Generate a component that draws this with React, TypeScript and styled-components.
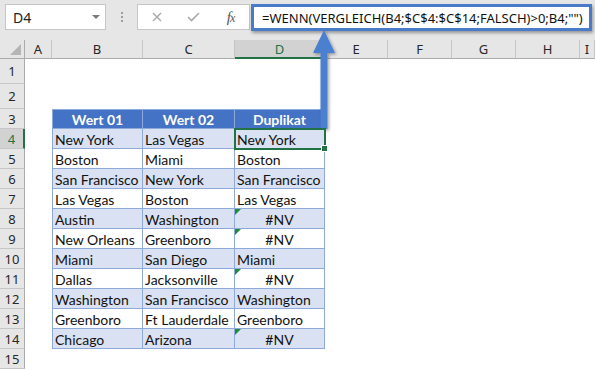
import * as React from 'react';
import styled, { createGlobalStyle, css } from 'styled-components';

const GREEN = '#217346';
const TABLE_LINE = '#8eaadb';
const UI_FONT = `'Noto Sans', 'Open Sans', sans-serif`;
const CELL_FONT = `Lato, 'Liberation Sans', sans-serif`;

const GlobalStyle = createGlobalStyle`
  html, body {
    margin: 0;
    padding: 0;
    background: #fff;
  }
  body {
    font-family: ${UI_FONT};
  }
`;

const Window = styled.div`
  position: relative;
  width: 595px;
  height: 370px;
  overflow: hidden;
  background: #fff;
`;

// formula bar
const FormulaBar = styled.div`
  display: flex;
  align-items: flex-start;
  height: 40px;
  padding: 4px 3px 0 5px;
  box-sizing: border-box;
  background: #e6e6e6;
`;

const NameBox = styled.div`
  flex: 0 0 101px;
  display: flex;
  align-items: center;
  justify-content: space-between;
  height: 26px;
  padding: 0 5px 0 7px;
  box-sizing: border-box;
  border: 1px solid #c6c6c6;
  background: #fff;
  font-size: 14px;
  color: #222;
`;

const Caret = styled.span`
  width: 0;
  height: 0;
  border-left: 4px solid transparent;
  border-right: 4px solid transparent;
  border-top: 4px solid #7a7a7a;
`;

const Grip = styled.div`
  flex: 0 0 31px;
  display: flex;
  flex-direction: column;
  align-items: center;
  justify-content: center;
  gap: 2px;
  height: 26px;
`;

const GripDot = styled.span`
  width: 2px;
  height: 2px;
  background: #9d9d9d;
`;

const FxBox = styled.div`
  flex: 0 0 113px;
  display: flex;
  align-items: center;
  height: 26px;
  box-sizing: border-box;
  border: 1px solid #c6c6c6;
  background: #fff;
`;

const FxSlot = styled.div`
  display: flex;
  align-items: center;
  justify-content: center;
  width: 37px;
  height: 100%;
`;

const FxLabel = styled.span`
  font-family: 'Liberation Serif', serif;
  font-style: italic;
  font-size: 15px;
  color: #555;
  letter-spacing: -1px;

  small {
    font-size: 12px;
  }
`;

const FormulaInput = styled.div`
  flex: 1;
  min-width: 0;
  display: flex;
  align-items: center;
  height: 27px;
  margin-left: 1px;
  padding-left: 8px;
  box-sizing: border-box;
  border: 3px solid #4a7bcb;
  box-shadow: 1px 2px 3px rgba(0, 0, 0, 0.35);
  background: #fff;
  font-size: 13px;
  color: #111;
  white-space: nowrap;
  overflow: hidden;
`;

// sheet
const Sheet = styled.div`
  display: grid;
  grid-template-columns: 25px 27px 91px 92px 90px 63px 64px 64px 64px 1fr;
  grid-template-rows: 19px 25px 25px repeat(13, 20px);
`;

const headBase = css`
  display: flex;
  align-items: center;
  justify-content: center;
  box-sizing: border-box;
  background: #e6e6e6;
  font-family: ${UI_FONT};
  font-size: 13px;
  color: #262626;
`;

const Corner = styled.div`
  ${headBase};
  align-items: flex-end;
  justify-content: flex-end;
  padding: 0 3px 3px 0;
  border-right: 1px solid #ababab;
  border-bottom: 1px solid #ababab;
`;

const CornerMark = styled.span`
  width: 11px;
  height: 11px;
  background: #b5b5b5;
  clip-path: polygon(100% 0, 100% 100%, 0 100%);
`;

const ColHead = styled.div<{ $active?: boolean }>`
  ${headBase};
  border-right: 1px solid #c6c6c6;
  border-bottom: 1px solid #ababab;
  ${(p) =>
    p.$active &&
    css`
      background: #d2d2d2;
      color: ${GREEN};
      border-bottom: 2px solid ${GREEN};
    `}
`;

const RowHead = styled.div<{ $active?: boolean }>`
  ${headBase};
  border-right: 1px solid #ababab;
  border-bottom: 1px solid #c6c6c6;
  ${(p) =>
    p.$active &&
    css`
      background: #d2d2d2;
      color: ${GREEN};
      border-right: 2px solid ${GREEN};
    `}
`;

const Blank = styled.div`
  background: #fff;
`;

const TableHead = styled.div<{ $first?: boolean }>`
  display: flex;
  align-items: center;
  justify-content: center;
  box-sizing: border-box;
  background: #4472c4;
  color: #fff;
  font-family: ${CELL_FONT};
  font-weight: bold;
  font-size: 14px;
  border-top: 1px solid ${TABLE_LINE};
  border-right: 1px solid ${TABLE_LINE};
  border-bottom: 1px solid ${TABLE_LINE};
  ${(p) => p.$first && `border-left: 1px solid ${TABLE_LINE};`}
`;

const TableCell = styled.div<{
  $first?: boolean;
  $shaded?: boolean;
  $center?: boolean;
  $error?: boolean;
  $selected?: boolean;
}>`
  position: relative;
  display: flex;
  align-items: center;
  justify-content: ${(p) => (p.$center ? 'center' : 'flex-start')};
  padding: 1px 0 0 ${(p) => (p.$center ? '0' : '2px')};
  box-sizing: border-box;
  background: ${(p) => (p.$shaded ? '#d9e1f2' : '#fff')};
  color: #111;
  font-family: ${CELL_FONT};
  font-size: 14px;
  white-space: nowrap;
  border-right: 1px solid ${TABLE_LINE};
  border-bottom: 1px solid ${TABLE_LINE};
  ${(p) => p.$first && `border-left: 1px solid ${TABLE_LINE};`}

  ${(p) =>
    p.$error &&
    css`
      &::before {
        content: '';
        position: absolute;
        top: 0;
        left: 0;
        border-top: 6px solid #1e8c3a;
        border-right: 6px solid transparent;
      }
    `}

  ${(p) =>
    p.$selected &&
    css`
      z-index: 2;
      outline: 2px solid ${GREEN};
      outline-offset: -1px;

      &::after {
        content: '';
        position: absolute;
        right: -4px;
        bottom: -4px;
        width: 5px;
        height: 5px;
        background: ${GREEN};
        border: 1px solid #fff;
      }
    `}
`;

const Arrow = styled.svg`
  position: absolute;
  left: 309px;
  top: 28px;
  overflow: visible;
`;

const COLUMNS = ['A', 'B', 'C', 'D', 'E', 'F', 'G', 'H', 'I'];
const HEADERS = ['Wert 01', 'Wert 02', 'Duplikat'];
const ROWS: [string, string, string][] = [
  ['New York', 'Las Vegas', 'New York'],
  ['Boston', 'Miami', 'Boston'],
  ['San Francisco', 'New York', 'San Francisco'],
  ['Las Vegas', 'Boston', 'Las Vegas'],
  ['Austin', 'Washington', '#NV'],
  ['New Orleans', 'Greenboro', '#NV'],
  ['Miami', 'San Diego', 'Miami'],
  ['Dallas', 'Jacksonville', '#NV'],
  ['Washington', 'San Francisco', 'Washington'],
  ['Greenboro', 'Ft Lauderdale', 'Greenboro'],
  ['Chicago', 'Arizona', '#NV'],
];
const ROW_COUNT = 15;
const ACTIVE_ROW = 4;
const ACTIVE_COL = 'D';

function renderCell(row: number, col: number) {
  const key = `${row}-${col}`;
  // col 0 is the row header, col 1 is A
  if (col === 0) {
    return (
      <RowHead key={key} $active={row === ACTIVE_ROW}>
        {row}
      </RowHead>
    );
  }
  const tableCol = col - 2; // B..D -> 0..2
  if (tableCol >= 0 && tableCol < 3) {
    if (row === 3) {
      return (
        <TableHead key={key} $first={tableCol === 0}>
          {HEADERS[tableCol]}
        </TableHead>
      );
    }
    const item = ROWS[row - 4];
    if (item) {
      const value = item[tableCol];
      const isError = value === '#NV';
      return (
        <TableCell
          key={key}
          $first={tableCol === 0}
          $shaded={(row - 4) % 2 === 0}
          $center={isError}
          $error={isError}
          $selected={row === ACTIVE_ROW && COLUMNS[col - 1] === ACTIVE_COL}
        >
          {value}
        </TableCell>
      );
    }
  }
  return <Blank key={key} />;
}

export default function App() {
  const rows: number[] = [];
  for (let r = 1; r <= ROW_COUNT; r++) rows.push(r);

  return (
    <Window>
      <GlobalStyle />
      <FormulaBar>
        <NameBox>
          <span>D4</span>
          <Caret />
        </NameBox>
        <Grip>
          <GripDot />
          <GripDot />
          <GripDot />
        </Grip>
        <FxBox>
          <FxSlot>
            <svg width="10" height="10" viewBox="0 0 10 10">
              <path d="M1 1L9 9M9 1L1 9" stroke="#a9a9a9" strokeWidth="1.4" />
            </svg>
          </FxSlot>
          <FxSlot>
            <svg width="13" height="10" viewBox="0 0 13 10">
              <path d="M1 5L4.5 8.5L12 1" stroke="#a9a9a9" strokeWidth="1.6" fill="none" />
            </svg>
          </FxSlot>
          <FxSlot>
            <FxLabel>
              f<small>x</small>
            </FxLabel>
          </FxSlot>
        </FxBox>
        <FormulaInput>=WENN(VERGLEICH(B4;$C$4:$C$14;FALSCH)&gt;0;B4;"")</FormulaInput>
      </FormulaBar>

      <Sheet>
        <Corner>
          <CornerMark />
        </Corner>
        {COLUMNS.map((c) => (
          <ColHead key={c} $active={c === ACTIVE_COL}>
            {c}
          </ColHead>
        ))}
        {rows.map((r) =>
          Array.from({ length: COLUMNS.length + 1 }, (_, c) => renderCell(r, c)),
        )}
      </Sheet>

      <Arrow width="30" height="104" viewBox="0 0 30 104">
        <defs>
          <filter id="arrowShadow" x="-50%" y="-20%" width="200%" height="140%">
            <feDropShadow dx="1.5" dy="1.5" stdDeviation="1.5" floodColor="#000" floodOpacity="0.35" />
          </filter>
        </defs>
        <path
          d="M15 2L26 25L18.5 25L18.5 101L11.5 101L11.5 25L4 25Z"
          fill="#4b7fcf"
          filter="url(#arrowShadow)"
        />
      </Arrow>
    </Window>
  );
}
